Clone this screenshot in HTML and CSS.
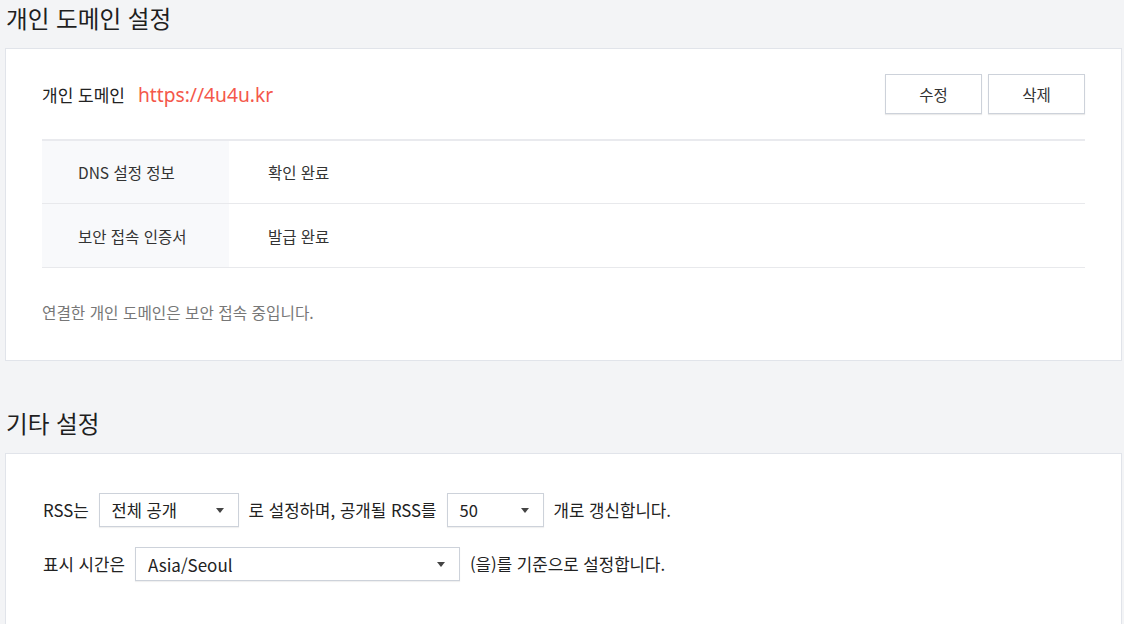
FILE: index.html
```html
<!DOCTYPE html>
<html lang="ko">
<head>
<meta charset="utf-8">
<link rel="stylesheet" href="styles.css">
</head>
<body>
<div class="page">
  <section class="section">
    <h2 class="section-title">개인 도메인 설정</h2>
    <div class="card card-domain">
      <div class="domain-head">
        <div class="domain-info">
          <span class="domain-label">개인 도메인</span>
          <span class="domain-url">https://4u4u.kr</span>
        </div>
        <div class="btn-group">
          <button class="btn">수정</button>
          <button class="btn">삭제</button>
        </div>
      </div>
      <div class="info-table">
        <div class="info-row">
          <div class="info-key">DNS 설정 정보</div>
          <div class="info-val">확인 완료</div>
        </div>
        <div class="info-row">
          <div class="info-key">보안 접속 인증서</div>
          <div class="info-val">발급 완료</div>
        </div>
      </div>
      <p class="note">연결한 개인 도메인은 보안 접속 중입니다.</p>
    </div>
  </section>

  <section class="section">
    <h2 class="section-title">기타 설정</h2>
    <div class="card card-etc">
      <div class="form-row">
        <span>RSS는</span>
        <div class="select select-rss">
          <span class="select-text">전체 공개</span>
          <svg class="caret" width="8" height="5" viewBox="0 0 8 5"><path d="M0 0H8L4 5Z" fill="#444"/></svg>
        </div>
        <span>로 설정하며, 공개될 RSS를</span>
        <div class="select select-count">
          <span class="select-text">50</span>
          <svg class="caret" width="8" height="5" viewBox="0 0 8 5"><path d="M0 0H8L4 5Z" fill="#444"/></svg>
        </div>
        <span>개로 갱신합니다.</span>
      </div>
      <div class="form-row">
        <span>표시 시간은</span>
        <div class="select select-tz">
          <span class="select-text tz">Asia/Seoul</span>
          <svg class="caret" width="8" height="5" viewBox="0 0 8 5"><path d="M0 0H8L4 5Z" fill="#444"/></svg>
        </div>
        <span>(을)를 기준으로 설정합니다.</span>
      </div>
    </div>
  </section>
</div>
</body>
</html>
```

FILE: styles.css
```css
html, body {
  margin: 0;
  padding: 0;
  background: #f3f4f6;
}
body {
  font-family: "Noto Sans CJK KR", "Noto Sans", sans-serif;
  color: #222;
  overflow: hidden;
}
.page {
  padding: 0 2px 0 5px;
}
.section + .section {
  margin-top: 44px;
}
.section-title {
  margin: 0 0 12px;
  font-size: 23.6px;
  line-height: 36px;
  font-weight: 400;
  color: #1f1f1f;
  padding-left: 1px;
}
.card {
  background: #fff;
  border: 1px solid #e1e4ea;
}
.card-domain {
  padding: 25px 36px 36px 36px;
}
.domain-head {
  display: flex;
  align-items: center;
  justify-content: space-between;
  height: 40px;
}
.domain-info {
  display: flex;
  align-items: center;
  gap: 13px;
}
.domain-label {
  font-size: 17px;
  color: #222;
}
.domain-url {
  font-family: "Noto Sans", "Noto Sans CJK KR", sans-serif;
  font-size: 19.2px;
  color: #f4584b;
}
.btn-group {
  display: flex;
  gap: 6px;
}
.btn {
  width: 97px;
  height: 40px;
  background: #fff;
  border: 1px solid #cdd2da;
  box-shadow: 0 1px 1px rgba(0, 0, 0, 0.08);
  font-family: "Noto Sans CJK KR", sans-serif;
  font-size: 15.5px;
  color: #333;
  padding: 0;
}
.info-table {
  margin-top: 25px;
  border-top: 2px solid #e9eaee;
}
.info-row {
  display: flex;
  height: 63px;
  border-bottom: 1px solid #e8e9ec;
  box-sizing: border-box;
  font-size: 15.5px;
  color: #333;
}
.info-row + .info-row {
  height: 64px;
}
.info-key {
  width: 187px;
  box-sizing: border-box;
  padding-left: 36px;
  background: #f8f9fb;
  display: flex;
  align-items: center;
}
.info-val {
  padding-left: 39px;
  display: flex;
  align-items: center;
}
.note {
  margin: 34px 0 0;
  font-size: 15.7px;
  line-height: 22px;
  color: #777;
}
.card-etc {
  padding: 39px 36px 60px 37px;
}
.form-row {
  display: flex;
  align-items: center;
  gap: 10px;
  font-size: 16.8px;
  color: #222;
}
.form-row + .form-row {
  margin-top: 20px;
}
.select {
  height: 34px;
  box-sizing: border-box;
  border: 1px solid #cdd2da;
  box-shadow: 0 1px 1px rgba(0, 0, 0, 0.06);
  background: #fff;
  display: flex;
  align-items: center;
  justify-content: space-between;
  padding: 0 14px 0 12px;
}
.select-text {
  font-size: 16.5px;
  color: #222;
}
.select-text.tz {
  font-size: 17px;
}
.select-rss {
  width: 140px;
}
.select-count {
  width: 97px;
}
.select-tz {
  width: 325px;
}
.caret {
  display: block;
}
```
